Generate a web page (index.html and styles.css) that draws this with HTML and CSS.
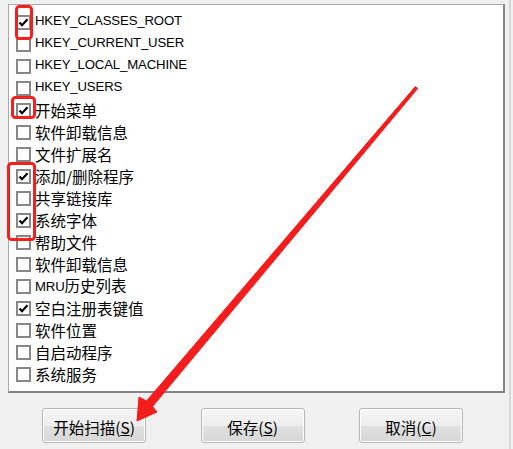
FILE: index.html
```html
<!DOCTYPE html>
<html lang="zh-CN">
<head>
  <meta charset="UTF-8" />
  <title>注册表扫描</title>
  <link rel="stylesheet" href="styles.css">
</head>
<body>
  <div class="window">
    <ul class="list">
      <li><span class="box"><svg viewBox="0 0 11 11"><polyline points="1.5,5.5 4,8.2 9.5,2.2" /></svg></span><span class="en">HKEY_CLASSES_ROOT</span></li>
      <li><span class="box"></span><span class="en">HKEY_CURRENT_USER</span></li>
      <li><span class="box"></span><span class="en">HKEY_LOCAL_MACHINE</span></li>
      <li><span class="box"></span><span class="en">HKEY_USERS</span></li>
      <li><span class="box"><svg viewBox="0 0 11 11"><polyline points="1.5,5.5 4,8.2 9.5,2.2" /></svg></span><span>开始菜单</span></li>
      <li><span class="box"></span><span>软件卸载信息</span></li>
      <li><span class="box"></span><span>文件扩展名</span></li>
      <li><span class="box"><svg viewBox="0 0 11 11"><polyline points="1.5,5.5 4,8.2 9.5,2.2" /></svg></span><span>添加/删除程序</span></li>
      <li><span class="box"></span><span>共享链接库</span></li>
      <li><span class="box"><svg viewBox="0 0 11 11"><polyline points="1.5,5.5 4,8.2 9.5,2.2" /></svg></span><span>系统字体</span></li>
      <li><span class="box"></span><span>帮助文件</span></li>
      <li><span class="box"></span><span>软件卸载信息</span></li>
      <li><span class="box"></span><span><span class="en">MRU</span>历史列表</span></li>
      <li><span class="box"><svg viewBox="0 0 11 11"><polyline points="1.5,5.5 4,8.2 9.5,2.2" /></svg></span><span>空白注册表键值</span></li>
      <li><span class="box"></span><span>软件位置</span></li>
      <li><span class="box"></span><span>自启动程序</span></li>
      <li><span class="box"></span><span>系统服务</span></li>
    </ul>

    <div class="buttons">
      <button>开始扫描(<u>S</u>)</button>
      <button>保存(<u>S</u>)</button>
      <button>取消(<u>C</u>)</button>
    </div>

    <!-- red annotations drawn over the dialog -->
    <svg class="marks" width="513" height="449" viewBox="0 0 513 449">
      <rect x="16.5" y="6.5" width="15" height="32" rx="3" />
      <rect x="12.5" y="97.5" width="22" height="20" rx="3" />
      <rect x="8.5" y="163.5" width="26" height="76" rx="3" />
      <polygon class="arrow" points="137,421 139,397 146.5,401 415.3,86.6 417.7,88.4 152.5,406.5 157,412" />
    </svg>
  </div>
</body>
</html>
```

FILE: styles.css
```css
body {
  margin: 0;
  background: #f0f0f0;
  color: #000;
  font-family: "Liberation Sans", "Noto Sans CJK SC", sans-serif;
}
.window {
  position: relative;
  width: 511px;
  height: 449px;
  box-sizing: border-box;
  padding: 4px 0 0 8px;
  border-right: 2px solid #d8d8d8;
}
.list {
  list-style: none;
  margin: 0;
  padding: 6px 0 0;
  width: 497px;
  height: 389px;
  box-sizing: border-box;
  background: #fff;
  border: 1px solid #a9a9a9;
  border-right: 2px solid #858585;
  border-bottom: 2px solid #858585;
}
.list li {
  display: flex;
  align-items: center;
  gap: 4px;
  height: 22px;
  line-height: 22px;
  padding-left: 7px;
  font-family: "Noto Sans CJK SC", sans-serif;
  font-size: 15.5px;
  white-space: nowrap;
}
.box {
  display: flex;
  width: 15px;
  height: 15px;
  box-sizing: border-box;
  border: 2px solid #878787;
  background: #fff;
}
.box svg {
  width: 11px;
  height: 11px;
}
.box polyline {
  fill: none;
  stroke: #000;
  stroke-width: 2.2;
}
.en {
  font-family: "Liberation Sans", sans-serif;
  font-size: 13.2px;
  letter-spacing: -0.15px;
  position: relative;
  top: -1px;
}
.buttons {
  display: flex;
  gap: 54.5px;
  margin: 15px 0 0 34px;
}
.buttons button {
  width: 104px;
  height: 35px;
  padding: 3px 0 0;
  font-family: "Noto Sans CJK SC", sans-serif;
  font-size: 15.5px;
  color: #000;
  border: 1px solid #b8b8b8;
  border-radius: 3px;
  background: linear-gradient(#f5f5f5, #ededed 50%, #e0e0e0 50%, #d7d7d7);
  box-shadow: inset 0 0 0 1px #fbfbfb;
}
.marks {
  position: absolute;
  top: 0;
  left: 0;
  pointer-events: none;
}
.marks rect {
  fill: none;
  stroke: #f42020;
  stroke-width: 3;
}
.marks .arrow {
  fill: #f41c1c;
  stroke: #f41c1c;
  stroke-width: 1;
  stroke-linejoin: round;
}
```
